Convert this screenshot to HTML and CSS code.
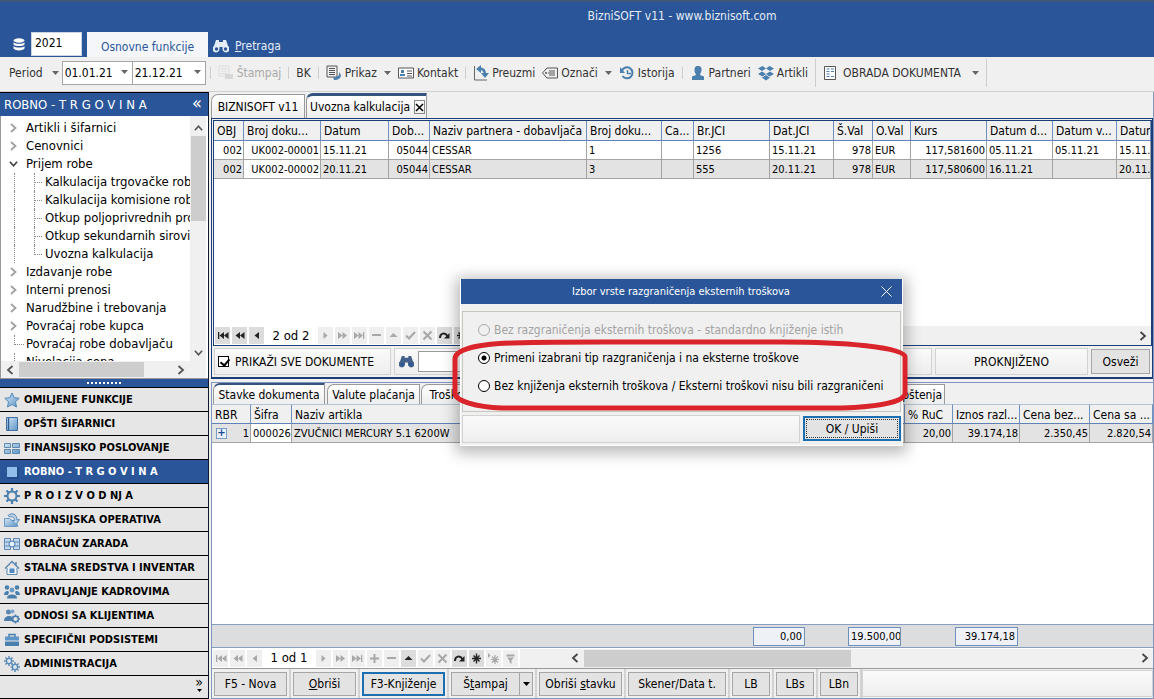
FILE: index.html
```html
<!DOCTYPE html>
<html lang="sr-Latn">
<head>
<meta charset="utf-8">
<title>BizniSOFT v11 - www.biznisoft.com</title>
<link rel="stylesheet" href="styles.css">
</head>
<body>
<svg class="defs" aria-hidden="true">
  <defs>
    <linearGradient id="g" x1="0" y1="0" x2="1" y2="1"><stop offset="0" stop-color="#d3e6f5"/><stop offset="1" stop-color="#5f95c6"/></linearGradient>
    <symbol id="right" viewBox="0 0 8 10"><path d="M1.500 1 6 5l-4.500 4" fill="none" stroke="currentColor" stroke-width="1.800"/></symbol>
    <symbol id="left" viewBox="0 0 8 10"><path d="M6.500 1 2 5l4.500 4" fill="none" stroke="currentColor" stroke-width="1.800"/></symbol>
    <symbol id="down" viewBox="0 0 10 8"><path d="M1 1.500 5 6l4-4.500" fill="none" stroke="currentColor" stroke-width="1.800"/></symbol>
    <symbol id="up" viewBox="0 0 10 8"><path d="M1 6.500 5 2l4 4.500" fill="none" stroke="currentColor" stroke-width="1.800"/></symbol>
    <symbol id="caret" viewBox="0 0 7 4"><path d="M0 0h7L3.500 4z" fill="currentColor"/></symbol>
    <symbol id="n-first" viewBox="0 0 15 15"><path d="M3 4h1.300v7H3zM9 4v7L4.500 7.500zM13.500 4v7L9 7.500z" fill="currentColor"/></symbol>
    <symbol id="n-pprev" viewBox="0 0 15 15"><path d="M8 4v7L3.500 7.500zM12.500 4v7L8 7.500z" fill="currentColor"/></symbol>
    <symbol id="n-prev" viewBox="0 0 15 15"><path d="M10 4v7L5.500 7.500z" fill="currentColor"/></symbol>
    <symbol id="n-next" viewBox="0 0 15 15"><path d="M5.500 4v7l4-3.500z" fill="currentColor"/></symbol>
    <symbol id="n-nnext" viewBox="0 0 15 15"><path d="M3 4v7l4.500-3.500zM7.500 4v7L12 7.500z" fill="currentColor"/></symbol>
    <symbol id="n-last" viewBox="0 0 15 15"><path d="M2 4v7l4.500-3.500zM6.500 4v7L11 7.500zM11 4h1.300v7H11z" fill="currentColor"/></symbol>
    <symbol id="n-plus" viewBox="0 0 15 15"><path d="M3 7.500h9M7.500 3v9" stroke="currentColor" stroke-width="2"/></symbol>
    <symbol id="n-minus" viewBox="0 0 15 15"><path d="M3 7h9" stroke="currentColor" stroke-width="2"/></symbol>
    <symbol id="n-edit" viewBox="0 0 15 15"><path d="M3.500 9h8l-4-4z" fill="currentColor"/></symbol>
    <symbol id="n-ok" viewBox="0 0 15 15"><path d="m3 7.500 3 3 6-6.500" fill="none" stroke="currentColor" stroke-width="2"/></symbol>
    <symbol id="n-x" viewBox="0 0 15 15"><path d="m3.500 3.500 8 8m0-8-8 8" stroke="currentColor" stroke-width="2"/></symbol>
    <symbol id="n-redo" viewBox="0 0 15 15"><path d="M3 10c0-5 5-6 7.500-2" fill="none" stroke="currentColor" stroke-width="2"/><path d="M12.500 5v5.500H7z" fill="currentColor"/></symbol>
    <symbol id="n-star" viewBox="0 0 15 15"><path d="M7.500 2.500v10M3 7.500h9M4.500 4.500l6 6m0-6-6 6" stroke="currentColor" stroke-width="1.400"/></symbol>
    <symbol id="n-bm" viewBox="0 0 15 15"><path d="M9 4v9M5 8.500h8M6 5.500l6 6m0-6-6 6" stroke="currentColor" stroke-width="1.200"/><path d="M2 2v5l2.500-2.500z" fill="currentColor"/></symbol>
    <symbol id="n-filter" viewBox="0 0 15 15"><path d="M3.500 3.500h8v2h-8zM4 6.500h7l-2.500 3V13L6.500 11V9.500z" fill="currentColor"/></symbol>
    <symbol id="binoc" viewBox="0 0 16 14"><path d="M3 1h3v2h4V1h3l2 6a3.500 3.500 0 1 1-5.500 3V8h-3v2A3.500 3.500 0 1 1 1 7z" fill="currentColor"/><circle cx="3.500" cy="10" r="1.700" class="hole"/><circle cx="12.500" cy="10" r="1.700" class="hole"/></symbol>
  </defs>
</svg>

<header class="titlebar">
  <h1>BizniSOFT v11 - www.biznisoft.com</h1>
  <div class="ribbon-tabs">
    <svg class="db" viewBox="0 0 12 13" aria-hidden="true"><ellipse cx="6" cy="2.500" rx="5.500" ry="2.200"/><path d="M.5 4.300c2 2 9 2 11 0v2.200c-2 2-9 2-11 0zM.5 8c2 2 9 2 11 0v2.500c-2 2.500-9 2.500-11 0z"/></svg>
    <input class="year" aria-label="Godina" value="2021">
    <button class="rtab active">Osnovne funkcije</button>
    <button class="rtab"><svg width="16" height="14"><use href="#binoc"/></svg><span><u>P</u>retraga</span></button>
  </div>
</header>

<nav class="toolbar">
  <button class="t period">Period <svg class="car"><use href="#caret"/></svg></button>
  <div class="combo"><input aria-label="Datum od" value="01.01.21"><svg class="car"><use href="#caret"/></svg></div>
  <div class="combo"><input aria-label="Datum do" value="21.12.21"><svg class="car"><use href="#caret"/></svg></div>
  <i class="sep"></i>
  <button class="t dim"><svg class="i16" viewBox="0 0 16 16"><path d="M1 1h10v10H1zM3 3.500h6M3 6h6M3 8.500h6" fill="none" stroke="#ddd"/><path d="M7 9h8v5H7z" fill="#d8d8d8"/></svg>Štampaj</button>
  <i class="sep"></i>
  <button class="t">BK</button>
  <i class="sep"></i>
  <button class="t prikaz"><svg class="i16" viewBox="0 0 16 16"><path d="M1 1h10v11H1zM3 3.500h6M3 5.500h6M3 7.500h6M3 9.500h6" fill="none" stroke="#555"/><path d="M13 7c4 4 1 8-5 8l-1-3c4 1 7-1 6-5z" fill="#4a7fae"/></svg>Prikaz <svg class="car"><use href="#caret"/></svg></button>
  <button class="t"><svg class="i16" viewBox="0 0 16 16"><path d="M.5 3h15v10H.5z" fill="#fff" stroke="#555"/><path d="M3 5h3v3H3zM2 9h5v2H2z" fill="#4a7fae"/><path d="M9 6h5M9 8.500h5M9 11h5" stroke="#555"/></svg>Kontakt</button>
  <i class="sep"></i>
  <button class="t"><svg class="i16" viewBox="0 0 16 16"><path d="M1.500 1v14H14" fill="none" stroke="#666"/><path d="M6 3.500c4 0 6 2 6 6" fill="none" stroke="#4a7fae" stroke-width="2.500"/><path d="m3 4 5-4v8zM8 8h8l-4 5z" fill="#4a7fae"/></svg>Preuzmi</button>
  <button class="t oznaci"><svg class="i16" viewBox="0 0 16 16"><path d="M5 3h10.500v10H5L.5 8z" fill="none" stroke="#555"/><path d="M7 6h6M6 8h7M7 10h6" stroke="#555"/><circle cx="4" cy="8" r="1" fill="#555"/></svg>Označi <svg class="car"><use href="#caret"/></svg></button>
  <button class="t"><svg class="i16" viewBox="0 0 16 16"><path d="M3 5.500A5.500 5.500 0 1 1 3.500 11" fill="none" stroke="#4a7fae" stroke-width="2"/><path d="M1 2v6h5z" fill="#4a7fae"/><path d="M8.500 5v3.500H12" fill="none" stroke="#4a7fae" stroke-width="1.500"/></svg>Istorija</button>
  <i class="sep"></i>
  <button class="t"><svg class="i16" viewBox="0 0 16 16"><path d="M8 1c3 0 4 2 3.500 4.500S10 9 10 10l4 1.500V15H2v-3.500L6 10c0-1-1.500-2-1.500-4.500S5 1 8 1z" fill="#4a7fae"/></svg>Partneri</button>
  <button class="t"><svg class="i16" viewBox="0 0 16 16"><path d="m4.500 1 3.500 2.500L4 6 0 3.500zM11.500 1 8 3.500 12 6l4-2.500zM4 6.500 8 9l-3.500 2.500L0 9zM12 6.500 8 9l3.500 2.500L16 9zM8 10l3.500 2.500L13 12 8 15.500 3 12l1.500.5z" fill="#4a7fae"/></svg>Artikli</button>
  <i class="sep tall"></i>
  <button class="t obrada"><svg class="i16" viewBox="0 0 16 16"><path d="M2.500 1.500h11v13h-11z" fill="#fff" stroke="#555"/><path d="M4.500 4h3M4.500 6.500h3M4.500 9h3M4.500 11.500h3M9 4h3M9 6.500h3M9 11.500h3" stroke="#4a7fae" stroke-width="1.200"/></svg>OBRADA DOKUMENTA <svg class="car"><use href="#caret"/></svg></button>
  <i class="sep tall"></i>
</nav>

<main class="main">
<aside class="side">
  <div class="side-head"><span>ROBNO - T R G O V I N A</span><button aria-label="Skupi">«</button></div>
  <div class="tree-box">
    <ul class="tree">
      <li class="node"><svg class="ch"><use href="#right"/></svg>Artikli i šifarnici</li>
      <li class="node"><svg class="ch"><use href="#right"/></svg>Cenovnici</li>
      <li class="node open"><svg class="ch"><use href="#down"/></svg>Prijem robe</li>
      <li class="leaf">Kalkulacija trgovačke robe</li>
      <li class="leaf">Kalkulacija komisione robe</li>
      <li class="leaf">Otkup poljoprivrednih pro</li>
      <li class="leaf">Otkup sekundarnih sirovina</li>
      <li class="leaf last">Uvozna kalkulacija</li>
      <li class="node"><svg class="ch"><use href="#right"/></svg>Izdavanje robe</li>
      <li class="node"><svg class="ch"><use href="#right"/></svg>Interni prenosi</li>
      <li class="node"><svg class="ch"><use href="#right"/></svg>Narudžbine i trebovanja</li>
      <li class="node"><svg class="ch"><use href="#right"/></svg>Povraćaj robe kupca</li>
      <li class="node bare">Povraćaj robe dobavljaču</li>
      <li class="node bare">Nivelacija cena</li>
    </ul>
    <div class="vbar"><svg class="av"><use href="#up"/></svg><i></i><svg class="av"><use href="#down"/></svg></div>
    <div class="hbar"><svg class="ah"><use href="#left"/></svg><i></i><svg class="ah"><use href="#right"/></svg></div>
  </div>
  <div class="grip"><i></i></div>
  <nav class="modules">
    <button><svg viewBox="0 0 16 16"><path d="m8 1 2.200 4.700 5 .6-3.700 3.500 1 5.200L8 12.500 3.500 15l1-5.200L.8 6.300l5-.6z" fill="url(#g)" stroke="#4f86b8"/></svg>OMILJENE FUNKCIJE</button>
    <button><svg viewBox="0 0 16 16"><path d="M2.500 1.500h11v13h-11z" fill="url(#g)" stroke="#3e6f9f"/><path d="M4.500 2v12" stroke="#2f5f90" stroke-width="1.500"/></svg>OPŠTI ŠIFARNICI</button>
    <button><svg viewBox="0 0 16 16"><path d="M.5 3.500h6v4h-6zM8.500 3.500h7v4h-7zM.5 9.500h6v4h-6zM8.500 9.500h7v4h-7z" fill="url(#g)" stroke="#5d88b0"/></svg>FINANSIJSKO POSLOVANJE</button>
    <button class="on"><svg viewBox="0 0 16 16"><path d="M3 3h10v10H3z" fill="#8fbce8"/><path d="M14 3v11H3" fill="none" stroke="#173e78"/></svg>ROBNO - T R G O V I N A</button>
    <button><svg viewBox="0 0 16 16"><circle cx="8" cy="8" r="4.500" fill="none" stroke="#4a7fae" stroke-width="2"/><path d="M8 0v4M8 12v4M0 8h4M12 8h4M2.500 2.500l2.500 2.500M11 11l2.500 2.500M13.500 2.500 11 5M5 11l-2.500 2.500" stroke="#4a7fae" stroke-width="2.200"/></svg>P R O I Z V O D NJ A</button>
    <button><svg viewBox="0 0 16 16"><path d="M.5 14.500V6.500h5l8 6v2z" fill="url(#g)" stroke="#6c9bc6"/><path d="M4 3.500C8 0 13 2 13 8l2.500-.5L12 12.500 8 8.500l2.500 0C10.500 5 8 4 5.500 5z" fill="#b6d1ea" stroke="#5d8cb8"/></svg>FINANSIJSKA OPERATIVA</button>
    <button><svg viewBox="0 0 16 16"><path d="M.5 2.500h6v11h-6zM9.500 2.500h6v11h-6zM1 6h5M1 10h5M10 6h5M10 10h5" fill="#c4dbef" stroke="#5d88b0"/><circle cx="8" cy="8" r="3" fill="#e4eff8" stroke="#4a7fae"/></svg>OBRAČUN ZARADA</button>
    <button><svg viewBox="0 0 16 16"><path d="M3 8v6.500h10V8" fill="#eef4fa" stroke="#5d88b0"/><path d="m1 8.500 7-7 7 7M12 2v3" fill="none" stroke="#5d88b0" stroke-width="1.500"/><path d="M5.500 8.500h5V13h-5z" fill="#5089be"/></svg>STALNA SREDSTVA I INVENTAR</button>
    <button><svg viewBox="0 0 16 16"><circle cx="3" cy="3.500" r="2.300" fill="#4a7fae"/><circle cx="13" cy="3.500" r="2.300" fill="#4a7fae"/><path d="M0 11c0-4 4-5 5-3l-1 3zM16 11c0-4-4-5-5-3l1 3z" fill="#4a7fae"/><circle cx="8" cy="6" r="3" fill="#6b9dca" stroke="#e6e6e6"/><path d="M2.500 15c0-4 3-5 5.500-5s5.500 1 5.500 5z" fill="#4a7fae" stroke="#e6e6e6"/></svg>UPRAVLJANJE KADROVIMA</button>
    <button><svg viewBox="0 0 16 16"><circle cx="4.500" cy="4" r="2.500" fill="#5d88b0"/><circle cx="8.500" cy="3.500" r="2" fill="#7ba5cc"/><path d="M0 13c0-4 3-5 5-5 3 0 4 2 4 5z" fill="#4a7fae"/><circle cx="11.500" cy="11" r="2.800" fill="#e6e6e6" stroke="#4a7fae" stroke-width="1.500"/><path d="M11.500 6.500V8M11.500 14v1.500M7 11h1.500M14.500 11H16M8.500 8l1 1M13.500 13l1 1M14.500 8l-1 1M9.500 13l-1 1" stroke="#4a7fae" stroke-width="1.500"/></svg>ODNOSI SA KLIJENTIMA</button>
    <button><svg viewBox="0 0 16 16"><path d="M5 5V2.500h6V5" fill="none" stroke="#4a7fae" stroke-width="1.500"/><path d="M1 4.500h14v4H1z" fill="#5f95c6"/><path d="M1 9.500h14V14H1z" fill="#4a7fae"/></svg>SPECIFIČNI PODSISTEMI</button>
    <button><svg viewBox="0 0 16 16"><circle cx="5" cy="5" r="2.600" fill="#dbe8f4" stroke="#5d8cb8" stroke-width="1.400"/><path d="M5 0v2M5 8v2M0 5h2M8 5h2M1.500 1.500l1.500 1.500M7 7l1.500 1.500M8.500 1.500 7 3M3 7 1.500 8.500" stroke="#5d8cb8" stroke-width="1.500"/><circle cx="11" cy="11" r="2.600" fill="#dbe8f4" stroke="#5d8cb8" stroke-width="1.400"/><path d="M11 6v2M11 14v2M6.500 11h1.500M14 11h2M7.500 7.500 9 9M13 13l1.500 1.500M14.500 7.500 13 9M9 13l-1.500 1.500" stroke="#5d8cb8" stroke-width="1.500"/></svg>ADMINISTRACIJA</button>
  </nav>
  <div class="more"><button aria-label="Još">»<svg class="car"><use href="#caret"/></svg></button></div>
</aside>

<section class="work">
  <div class="doc-tabs">
    <button>BIZNISOFT v11</button>
    <button class="cur">Uvozna kalkulacija <span class="x"><svg viewBox="0 0 9 9"><path d="m1 1 7 7m0-7L1 8" stroke="#000" stroke-width="1.500"/></svg></span></button>
  </div>
  <div class="upper">
    <div class="grid-box">
      <table class="grid docs">
        <colgroup><col class="w30"><col class="w77"><col class="w68"><col class="w41"><col class="w157"><col class="w75"><col class="w32"><col class="w76"><col class="w64"><col class="w39"><col class="w38"><col class="w76"><col class="w66"><col class="w64"><col></colgroup>
        <thead><tr><th>OBJ</th><th>Broj doku...</th><th>Datum</th><th>Dob...</th><th>Naziv partnera - dobavljača</th><th>Broj doku...</th><th>Ca...</th><th>Br.JCI</th><th>Dat.JCI</th><th>Š.Val</th><th>O.Val</th><th>Kurs</th><th>Datum d...</th><th>Datum v...</th><th>Datum</th></tr></thead>
        <tbody>
          <tr><td class="r">002</td><td class="r">UK002-00001</td><td>15.11.21</td><td class="r">05044</td><td>CESSAR</td><td>1</td><td></td><td>1256</td><td>15.11.21</td><td class="r">978</td><td>EUR</td><td class="r">117,581600</td><td>05.11.21</td><td>05.11.21</td><td>15.11.21</td></tr>
          <tr class="sel"><td class="r">002</td><td class="r focus">UK002-00002</td><td>20.11.21</td><td class="r">05044</td><td>CESSAR</td><td>3</td><td></td><td>555</td><td>20.11.21</td><td class="r">978</td><td>EUR</td><td class="r">117,580600</td><td>16.11.21</td><td></td><td>20.11.21</td></tr>
        </tbody>
      </table>
      <div class="space"></div>
      <div class="navr">
        <button class="e" aria-label="Prvi"><svg><use href="#n-first"/></svg></button><button class="e" aria-label="Strana nazad"><svg><use href="#n-pprev"/></svg></button><button class="e" aria-label="Prethodni"><svg><use href="#n-prev"/></svg></button>
        <span class="pos">2 od 2</span>
        <button aria-label="Sledeći"><svg><use href="#n-next"/></svg></button><button aria-label="Strana napred"><svg><use href="#n-nnext"/></svg></button><button aria-label="Poslednji"><svg><use href="#n-last"/></svg></button><button aria-label="Briši"><svg><use href="#n-minus"/></svg></button><button aria-label="Izmeni"><svg><use href="#n-edit"/></svg></button><button aria-label="Potvrdi"><svg><use href="#n-ok"/></svg></button><button aria-label="Poništi"><svg><use href="#n-x"/></svg></button><button class="e" aria-label="Osveži"><svg><use href="#n-redo"/></svg></button><button class="e" aria-label="Obeleži"><svg><use href="#n-star"/></svg></button>
        <div class="hb"><svg class="ah"><use href="#right"/></svg></div>
      </div>
    </div>
    <div class="filter">
      <label class="pan chk"><input type="checkbox" checked>PRIKAŽI SVE DOKUMENTE</label>
      <div class="pan find"><svg width="15" height="13"><use href="#binoc"/></svg><input aria-label="Traži"></div>
      <div class="pan stat">PROKNJIŽENO</div>
      <button class="btn osv">Osveži</button>
    </div>
  </div>
  <div class="lower">
    <div class="sub-tabs"><button class="cur">Stavke dokumenta</button><button>Valute plaćanja</button><button class="tr">Troškovi</button><button class="kn">Saopštenja</button></div>
    <table class="grid items">
      <colgroup><col class="w39"><col class="w41"><col><col class="w48"><col class="w67"><col class="w70"><col class="w63"></colgroup>
      <thead><tr><th>RBR</th><th>Šifra</th><th>Naziv artikla</th><th>% RuC</th><th>Iznos razl...</th><th>Cena bez...</th><th>Cena sa ...</th></tr></thead>
      <tbody><tr class="sel"><td class="r rbr"><button aria-label="Proširi">+</button>1</td><td class="focus">000026</td><td>ZVUČNICI MERCURY 5.1 6200W</td><td class="r">20,00</td><td class="r">39.174,18</td><td class="r">2.350,45</td><td class="r">2.820,54</td></tr></tbody>
    </table>
    <div class="space"></div>
    <div class="sums"><output class="s1">0,00</output><output class="s2">19.500,00</output><output class="s3">39.174,18</output></div>
    <div class="navr low">
      <button aria-label="Prvi"><svg><use href="#n-first"/></svg></button><button aria-label="Strana nazad"><svg><use href="#n-pprev"/></svg></button><button aria-label="Prethodni"><svg><use href="#n-prev"/></svg></button>
      <span class="pos">1 od 1</span>
      <button aria-label="Sledeći"><svg><use href="#n-next"/></svg></button><button aria-label="Strana napred"><svg><use href="#n-nnext"/></svg></button><button aria-label="Poslednji"><svg><use href="#n-last"/></svg></button><button aria-label="Dodaj"><svg><use href="#n-plus"/></svg></button><button aria-label="Briši"><svg><use href="#n-minus"/></svg></button><button class="e" aria-label="Izmeni"><svg><use href="#n-edit"/></svg></button><button aria-label="Potvrdi"><svg><use href="#n-ok"/></svg></button><button aria-label="Poništi"><svg><use href="#n-x"/></svg></button><button class="e" aria-label="Osveži"><svg><use href="#n-redo"/></svg></button><button class="e" aria-label="Obeleži"><svg><use href="#n-star"/></svg></button><button aria-label="Idi na oznaku"><svg><use href="#n-bm"/></svg></button><button aria-label="Filter"><svg><use href="#n-filter"/></svg></button>
      <div class="hb scroll"><svg class="ah"><use href="#left"/></svg><i class="thumb"></i><i class="rest"></i><svg class="ah"><use href="#right"/></svg></div>
    </div>
    <footer class="actions">
      <div class="slot"><button class="btn b73">F5 - Nova</button></div>
      <div class="slot"><button class="btn b63"><u>O</u>briši</button></div>
      <div class="slot"><button class="btn b83 def">F3-Knjiženje</button></div>
      <div class="slot"><button class="btn b69">Š<u>t</u>ampaj</button><button class="btn drop" aria-label="Opcije štampe"><svg class="car"><use href="#caret"/></svg></button></div>
      <div class="slot"><button class="btn b83">Obriši <u>s</u>tavku</button></div>
      <div class="slot"><button class="btn b98">Skener/Data t.</button></div>
      <div class="slot"><button class="btn b38">LB</button></div>
      <div class="slot"><button class="btn b38">LBs</button></div>
      <div class="slot"><button class="btn b38">LBn</button></div>
      <div class="pan fill"></div>
    </footer>
  </div>
</section>
</main>

<div class="dialog" role="dialog" aria-labelledby="dt">
  <div class="dhead"><h2 id="dt">Izbor vrste razgraničenja eksternih troškova</h2><button aria-label="Zatvori"><svg viewBox="0 0 11 11"><path d="m.5.500 10 10m0-10-10 10" stroke="#fff"/></svg></button></div>
  <div class="dbody">
    <label class="off"><input type="radio" name="o" disabled>Bez razgraničenja eksternih troškova - standardno knjiženje istih</label>
    <label><input type="radio" name="o" checked>Primeni izabrani tip razgraničenja i na eksterne troškove</label>
    <label><input type="radio" name="o">Bez knjiženja eksternih troškova / Eksterni troškovi nisu bili razgraničeni</label>
  </div>
  <div class="dfoot"><div class="pan"></div><button class="ok">OK / Upiši</button></div>
  <svg class="mark" viewBox="0 0 456 74" aria-hidden="true"><path d="M3 20C3 9 30 5 60 4Q100 3 150 3H330C390 3 453 8 453 18V54C453 64 420 68 390 69H50C24 68 3 62 3 54Z" fill="none" stroke="#d9242b" stroke-width="5"/></svg>
</div>
</body>
</html>
```
FILE: styles.css
```css
* { box-sizing: border-box; }
html, body { height: 100%; }
body { margin: 0; display: flex; flex-direction: column; overflow: hidden; background: #f0f0f0; color: #000; font: 12px/16px "DejaVu Sans Condensed", "Noto Sans", sans-serif; }
button, input { font: inherit; color: inherit; margin: 0; padding: 0; border: 0; background: none; }
ul { list-style: none; margin: 0; padding: 0; }
h1, h2 { margin: 0; font: inherit; }
svg { flex: none; }
.defs { position: absolute; width: 0; height: 0; }
.hole { fill: #2a5699; }
.car { width: 7px; height: 4px; color: #666; }

.titlebar { height: 57px; flex: none; display: flex; flex-direction: column; justify-content: space-between; background: #2a5699; border-top: 2px solid #3f5878; color: #e4ecf7; }
.titlebar h1 { padding: 6px 0 0 210px; text-align: center; }
.ribbon-tabs { display: flex; align-items: flex-end; height: 26px; }
.db { width: 12px; height: 13px; margin: 0 6px 6px 13px; fill: #fff; }
.year { width: 51px; height: 24px; margin: 0 5px 1px 0; padding: 0 3px 2px; background: #fff; color: #000; border: 1px solid #c9d4e4; }
.rtab { display: flex; align-items: center; gap: 6px; height: 25px; padding: 2px 5px 0; }
.rtab.active { width: 121px; justify-content: center; padding: 4px 0 0; background: #f4f6fa; color: #2a5699; }

.toolbar { height: 35px; flex: none; display: flex; align-items: center; padding: 0 0 2px 9px; border-bottom: 1px solid #cfcfcf; color: #333; white-space: nowrap; }
.t { display: flex; align-items: center; gap: 3px; margin-right: 7px; }
.t.period { gap: 9px; margin-right: 3px; }
.t.prikaz .car, .t.oznaci .car { margin-left: 4px; }
.t.obrada { gap: 5px; }
.t.obrada .car { margin-left: 6px; }
.t.dim { color: #a9a9a9; }
.i16 { width: 16px; height: 16px; }
.combo { display: flex; align-items: center; width: 71px; height: 24px; border: 1px solid #a5a5a5; background: #fff; color: #000; }
.combo + .combo { border-left: 0; width: 73px; }
.combo input { flex: 1; min-width: 0; padding-left: 2px; }
.combo .car { margin: 0 4px 2px 0; }
.sep { width: 1px; height: 12px; background: #cdcdcd; margin-right: 7px; }
.combo + .sep { margin-left: 4px; }
.sep.tall { height: 28px; margin-right: 6px; }

.main { flex: 1; min-height: 0; display: flex; }
.side { width: 209px; flex: none; display: flex; flex-direction: column; border-right: 1px solid #111a2c; }
.side-head { height: 24px; flex: none; display: flex; align-items: center; justify-content: space-between; padding: 0 6px 0 4px; background: #2a5699; border-top: 1px solid #000; color: #fff; font-size: 13px; }
.side-head button { font-size: 18px; line-height: 18px; padding-bottom: 3px; }
.tree-box { flex: 1; min-height: 0; display: grid; grid-template-columns: minmax(0, 1fr) 16px; grid-template-rows: minmax(0, 1fr) 17px; background: #fff; border-left: 1px solid #999; padding-right: 2px; border-bottom: 1px solid #999; }
.tree { overflow: hidden; padding-top: 3px; font-size: 13px; }
.tree li { display: flex; align-items: center; height: 18px; white-space: nowrap; position: relative; }
.node { padding-left: 8px; }
.node .ch { width: 9px; height: 10px; margin-right: 8px; color: #a0a0a0; }
.node.open .ch { color: #404040; }
.node.bare { padding-left: 25px; }
.node.bare::before { content: ""; position: absolute; left: 13px; top: 0; width: 9px; height: 9px; border-left: 1px dotted #888; border-bottom: 1px dotted #888; }
.leaf { padding-left: 44px; }
.leaf::before { content: ""; position: absolute; left: 13px; top: 0; bottom: 0; border-left: 1px dotted #888; }
.leaf::after { content: ""; position: absolute; left: 33px; top: 0; bottom: 0; width: 8px; border-left: 1px dotted #888; background: repeating-linear-gradient(90deg, #888 0 1px, transparent 1px 2px) 0 9px / 8px 1px no-repeat; }
.leaf.last::after { bottom: 8px; }
.vbar { display: flex; flex-direction: column; align-items: center; background: #f0f0f0; padding: 8px 0 4px; color: #555; }
.vbar i { width: 15px; height: 85px; background: #cdcdcd; }
.av { width: 9px; height: 8px; }
.vbar .av:first-child { margin-bottom: 4px; }
.vbar .av:last-child { margin-top: auto; }
.hbar { grid-column: 1 / 3; display: flex; align-items: center; background: #f0f0f0; padding: 0 21px 0 5px; color: #555; }
.hbar i { width: 125px; height: 15px; margin: 0 auto 0 5px; background: #cdcdcd; }
.ah { width: 8px; height: 10px; }
.grip { height: 8px; flex: none; display: flex; justify-content: center; align-items: center; background: #2a5699; }
.grip i { width: 35px; height: 2px; background: repeating-linear-gradient(90deg, #fff 0 2px, transparent 2px 4px); }
.modules button { width: 100%; height: 24px; display: flex; align-items: center; gap: 4px; padding-left: 4px; border-top: 1px solid #000; background: #e6e6e6; font: bold 11px/16px "DejaVu Sans Condensed", "Noto Sans", sans-serif; white-space: nowrap; text-align: left; }
.modules svg { width: 16px; height: 16px; }
.modules .on { background: #2a5699; color: #fff; }
.more { height: 24px; flex: none; display: flex; justify-content: flex-end; background: #e6e6e6; border-top: 1px solid #000; border-bottom: 1px solid #000; padding-right: 5px; }
.more button { display: flex; flex-direction: column; align-items: center; font-size: 14px; line-height: 12px; gap: 1px; }
.more .car { color: #000; width: 5px; height: 3px; }

.work { flex: 1; min-width: 0; display: flex; flex-direction: column; padding-left: 2px; border-right: 1px solid #7f97bf; }
.doc-tabs { height: 26px; flex: none; display: flex; align-items: flex-end; }
.doc-tabs button, .sub-tabs button { display: flex; align-items: center; justify-content: center; white-space: nowrap; overflow: hidden; border: 1px solid #999; border-bottom: 0; border-top-left-radius: 7px; background: linear-gradient(#fff, #eee); }
.doc-tabs button { width: 94px; height: 24px; padding-top: 1px; }
.doc-tabs .cur { width: 121px; height: 25px; gap: 4px; border-top: 3px solid #34547f; padding: 0 1px 0 3px; margin-left: 1px; }
.x { width: 14px; height: 14px; border: 1px solid #888; display: grid; place-items: center; }
.x svg { width: 9px; height: 9px; }
.upper { height: 261px; flex: none; display: flex; flex-direction: column; border: solid #1c3e78; border-width: 1px 1px 2px; padding: 1px 0 2px 1px; background: #f0f0f0; }
.grid-box { flex: 1; min-height: 0; display: flex; flex-direction: column; border: 1px solid #1c3e78; background: #fff; }
.grid { width: 100%; table-layout: fixed; border-collapse: separate; border-spacing: 0; font-size: 11px; line-height: 14px; }
.grid th, .grid td { height: 19px; padding: 1px 2px 0; font-weight: normal; text-align: left; white-space: nowrap; overflow: hidden; border-right: 1px solid #a3a3a3; border-bottom: 1px solid #a3a3a3; }
.grid th { height: 20px; padding: 1px 0 0 3px; font-size: 12px; background: #f0f0f0; border-bottom-color: #5f83b8; border-right-color: #6f8fbe; }
.grid .r { text-align: right; padding-right: 1px; }
.sel td { background: #e3e3e3; }
.grid td.focus { background: #fff; }
.space { flex: 1; background: #fff; }
.w30 { width: 30px; } .w32 { width: 32px; } .w38 { width: 38px; } .w39 { width: 39px; } .w41 { width: 41px; } .w48 { width: 48px; } .w63 { width: 63px; } .w64 { width: 64px; } .w66 { width: 66px; } .w67 { width: 67px; } .w68 { width: 68px; } .w70 { width: 70px; } .w75 { width: 75px; } .w76 { width: 76px; } .w77 { width: 77px; } .w157 { width: 157px; }
.navr { height: 19px; flex: none; display: flex; align-items: center; gap: 2px; padding-left: 1px; background: #fff; }
.navr button { width: 15px; height: 17px; flex: none; background: #efefef; color: #a8a8a8; display: grid; place-items: center; }
.navr button svg { width: 15px; height: 15px; }
.navr .e { background: #dcdcdc; color: #222; }
.pos { width: 50px; text-align: center; font-size: 13px; white-space: nowrap; }
.hb { flex: 1; min-width: 0; height: 19px; display: flex; align-items: center; justify-content: flex-end; background: #f0f0f0; padding-right: 4px; color: #444; }
.filter { display: flex; gap: 3px; height: 29px; flex: none; padding: 2px 2px 0 1px; }
.pan { border: 1px solid #d2d2d2; background: linear-gradient(#fafafa, #eee); }
.chk { width: 177px; display: flex; align-items: center; gap: 6px; padding-left: 3px; white-space: nowrap; }
.chk input { appearance: none; width: 11px; height: 11px; border: 1px solid #000; background: #fff; position: relative; }
.chk input::after { content: ""; position: absolute; left: 3px; top: 0; width: 4px; height: 7px; border: solid #000; border-width: 0 2px 2px 0; transform: rotate(40deg); }
.find { flex: 1; display: flex; align-items: center; gap: 4px; padding-left: 4px; color: #44618a; }
.find input { width: 100px; height: 21px; border: 1px solid #999; background: #fff; }
.stat { width: 153px; display: grid; place-items: center; }
.btn { background: #e3e3e3; border: 1px solid #a6a6a6; white-space: nowrap; text-align: center; }
.osv { width: 59px; height: 25px; margin-top: 1px; }

.lower { flex: 1; min-height: 0; display: flex; flex-direction: column; margin-top: 3px; border-left: 1px solid #7f97bf; border-bottom: 1px solid #7f97bf; border-top: 1px solid #7f97bf; }
.sub-tabs { height: 21px; flex: none; display: flex; align-items: flex-end; padding-left: 1px; }
.sub-tabs button { height: 20px; padding: 0 4px; width: 93px; margin-left: 2px; }
.sub-tabs .cur { width: 112px; height: 21px; margin-left: 0; border-top: 2px solid #34547f; }
.sub-tabs .tr { width: 60px; margin-left: 1px; }
.sub-tabs .kn { width: 462px; padding-right: 2px; justify-content: flex-end; }
.items th { border-top: 1px solid #b8c4d6; }
.rbr button { float: left; width: 11px; height: 11px; margin: 1px 0 0 2px; font: bold 10px/8px "DejaVu Sans", sans-serif; color: #1d4f91; background: #eaf1fa; border: 1px solid #7b9cc5; }
.sums { height: 24px; flex: none; display: flex; justify-content: flex-end; align-items: center; padding-right: 135px; background: #dcdddf; border: 1px solid #8a9dbc; border-width: 1px 0; }
.sums output { height: 19px; background: #eef1f6; border: 1px solid #6f8fbe; text-align: right; font-size: 11px; line-height: 18px; padding: 0 2px; overflow: hidden; white-space: nowrap; }
.s1 { width: 52px; margin-right: 43px; }
.s2 { width: 53px; margin-right: 54px; }
.sums .s2 { text-align: left; }
.s3 { width: 63px; }
.low { height: 21px; border-bottom: 1px solid #999; }
.low .hb { justify-content: flex-start; padding-left: 51px; gap: 5px; }
.thumb { flex: 269 1 0; height: 17px; background: #cdcdcd; }
.rest { flex: 282 1 0; }
.actions { height: 29px; flex: none; display: flex; }
.slot { display: flex; align-items: center; padding: 0 2px; border-right: 2px double #d2d2d2; }
.slot .btn { height: 24px; }
.b38 { width: 38px; } .b63 { width: 63px; } .b69 { width: 69px; } .b73 { width: 73px; } .b83 { width: 83px; } .b98 { width: 98px; }
.def { border: 2px solid #1c6fb0; }
.drop { width: 13px; border-left: 0; display: grid; place-items: center; }
.drop .car { color: #000; }
.fill { flex: 1; margin: 1px 0; }

.dialog { position: absolute; left: 460px; top: 279px; width: 443px; background: #f0f0f0; border: 1px solid #fff; border-top: 0; box-shadow: 0 3px 14px 4px rgba(0, 0, 0, .28); padding-bottom: 2px; }
.dhead { height: 25px; display: flex; align-items: center; background: #2a5699; color: #fff; padding-right: 10px; }
.dhead h2 { flex: 1; padding-left: 20px; text-align: center; font-size: 11px; }
.dhead button { display: grid; }
.dhead svg { width: 11px; height: 11px; }
.dbody { margin: 7px 1px 0; height: 101px; padding: 4px 0 0 15px; border: 1px solid #c9c5bf; display: flex; flex-direction: column; }
.dbody label { display: flex; align-items: center; gap: 4px; height: 28px; white-space: nowrap; }
.off { color: #a3a3a3; }
.dbody input { appearance: none; flex: none; width: 12px; height: 12px; border: 1px solid #000; border-radius: 50%; background: #fff; }
.dbody input:checked { background: radial-gradient(#000 0 2px, #fff 3px); }
.dbody input:disabled { border-color: #aaa; background: #f0f0f0; }
.dfoot { display: flex; gap: 3px; height: 28px; margin-top: 3px; padding: 0 1px; }
.dfoot .pan { flex: 1; }
.ok { width: 98px; height: 25px; margin-top: 1px; border: 2px solid #1c6fb0; background: #e3e3e3; outline: 1px dotted #333; outline-offset: -4px; }
.mark { position: absolute; left: -9px; top: 60px; width: 456px; height: 74px; pointer-events: none; }
```
